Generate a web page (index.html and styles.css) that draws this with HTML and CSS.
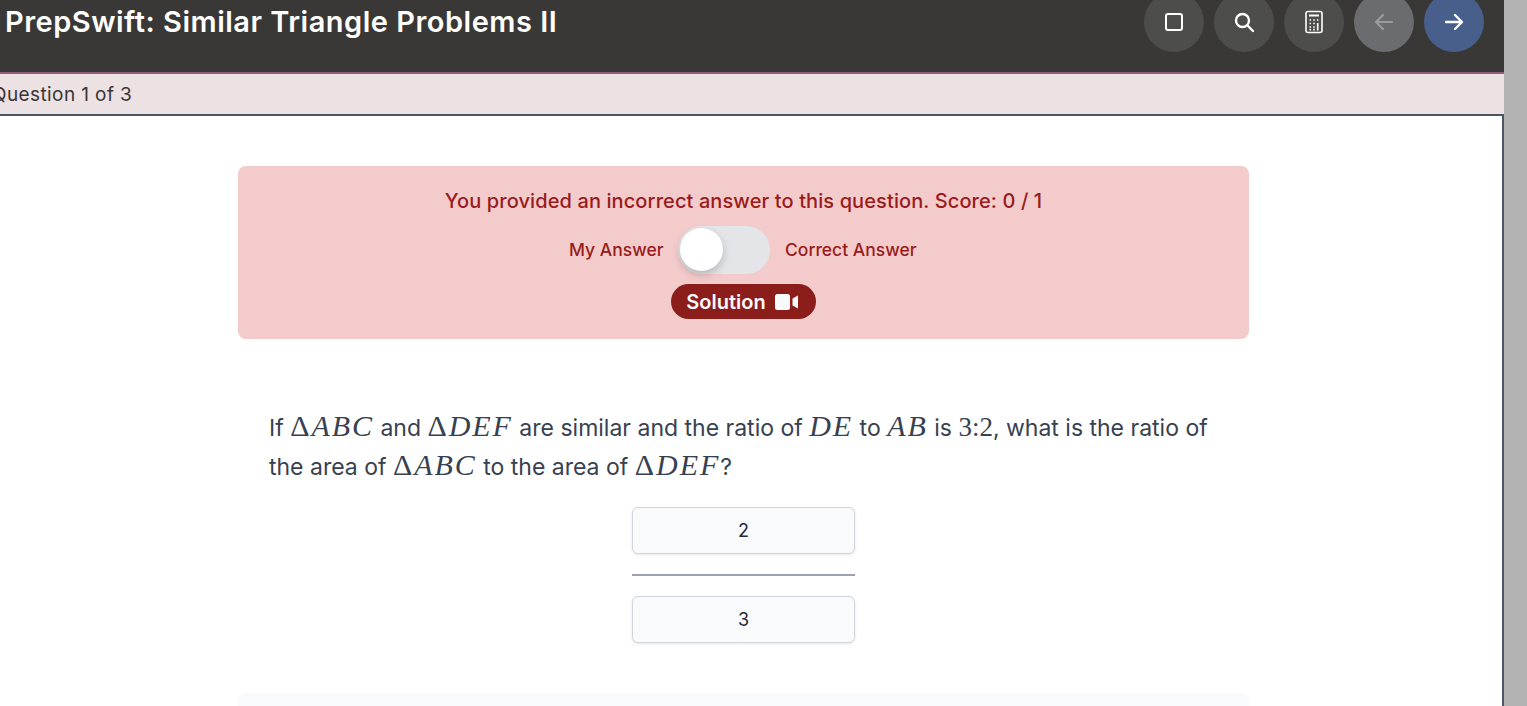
FILE: index.html
```html
<!DOCTYPE html>
<html lang="en">
<head>
    <meta charset="UTF-8">
    <title>PrepSwift: Similar Triangle Problems II</title>
    <link rel="stylesheet" href="styles.css">
</head>
<body>
    <div class="app">
        <header class="topbar">
            <h1>PrepSwift: Similar Triangle Problems II</h1>
            <div class="tools">
                <button class="tool">
                    <svg viewBox="0 0 24 24" width="24" height="24" fill="none" stroke="#fff" stroke-width="2"><rect x="4" y="4" width="16" height="16" rx="2"/></svg>
                </button>
                <button class="tool">
                    <svg viewBox="0 0 24 24" width="24" height="24" fill="none" stroke="#fff" stroke-width="2.4" stroke-linecap="round"><circle cx="10.500" cy="10.500" r="6.500"/><path d="M15.500 15.500L21 21"/></svg>
                </button>
                <button class="tool">
                    <svg viewBox="0 0 24 24" width="24" height="24" fill="none" stroke="#fff" stroke-width="1.600"><rect x="4" y="1.500" width="16" height="21" rx="2"/><path d="M7 5.500h10" stroke-width="2"/><path d="M7.500 10h1.600M11.200 10h1.600M14.900 10h1.600M7.500 13.500h1.600M11.200 13.500h1.600M7.500 17h1.600M11.200 17h1.600M7.500 19.600h1.600M11.200 19.600h1.600M15.700 13v7.500" stroke-width="1.700"/></svg>
                </button>
                <button class="tool tool-off">
                    <svg viewBox="0 0 24 24" width="24" height="24" fill="none" stroke="#9a9b9f" stroke-width="2.200" stroke-linecap="round" stroke-linejoin="round"><path d="M20 12H4M11 5l-7 7 7 7"/></svg>
                </button>
                <button class="tool tool-next">
                    <svg viewBox="0 0 24 24" width="24" height="24" fill="none" stroke="#fff" stroke-width="2.400" stroke-linecap="round" stroke-linejoin="round"><path d="M4 12h16M13 5l7 7-7 7"/></svg>
                </button>
            </div>
        </header>
        <div class="progress"><span>Question 1 of 3</span></div>
        <main class="content">
            <section class="result">
                <p class="result-text">You provided an incorrect answer to this question. Score: 0 / 1</p>
                <div class="switch-row">
                    <span class="switch-label left">My Answer</span>
                    <div class="switch"><div class="knob"></div></div>
                    <span class="switch-label">Correct Answer</span>
                </div>
                <button class="solution">Solution
                    <svg viewBox="0 0 24 16" width="24" height="16"><rect x="0" y="0" width="15" height="16" rx="2.500" fill="#f9fafb"/><path d="M17.500 4.500L23 1.500v13l-5.500-3z" fill="#f9fafb"/></svg>
                </button>
            </section>
            <p class="question">If <span class="math"><span class="up">Δ</span>ABC</span> and <span class="math"><span class="up">Δ</span>DEF</span> are similar and the ratio of <span class="math">DE</span> to <span class="math">AB</span> is <span class="math"><span class="up ratio">3:2</span></span>, what is the ratio of the area of <span class="math"><span class="up">Δ</span>ABC</span> to the area of <span class="math"><span class="up">Δ</span>DEF</span>?</p>
            <div class="fraction">
                <div class="answer">2</div>
                <div class="bar"></div>
                <div class="answer">3</div>
            </div>
            <section class="next-card"></section>
        </main>
    </div>
    <div class="gutter"></div>
</body>
</html>
```

FILE: styles.css
```css
* {
    box-sizing: border-box;
}
html, body {
    height: 100%;
    margin: 0;
    overflow: hidden;
}
body {
    display: flex;
    font-family: 'Inter', sans-serif;
    background: white;
    color: #374151;
}
.app {
    width: 1504px;
    height: 706px;
    display: flex;
    flex-direction: column;
    overflow: hidden;
}
.gutter {
    flex: 1;
    background: #b3b3b3;
}
.topbar {
    height: 74px;
    flex: none;
    display: flex;
    justify-content: space-between;
    align-items: flex-start;
    padding: 0 20px 0 5px;
    background: #393836;
    border-bottom: 2px solid #8f5f77;
}
h1 {
    margin: 3px 0 0;
    font-size: 29px;
    line-height: 38px;
    font-weight: 600;
    letter-spacing: 0.5px;
    color: white;
}
.tools {
    display: flex;
    gap: 10px;
    margin-top: -8px;
}
.tool {
    width: 60px;
    height: 60px;
    padding: 0;
    border: none;
    border-radius: 50%;
    background: #4d4d4c;
    display: flex;
    align-items: center;
    justify-content: center;
}
.tool-off {
    background: #6b6c70;
}
.tool-next {
    background: #485f8c;
}
.progress {
    height: 42px;
    flex: none;
    display: flex;
    align-items: center;
    background: #ece2e4;
    border-bottom: 2px solid #4b5563;
    font-size: 19px;
    letter-spacing: 0.4px;
    color: #3a3434;
}
.progress span {
    margin-left: -8px;
}
.content {
    flex: 1;
    padding: 50px 0 0 238px;
    border-right: 2px solid #4b5563;
}
.result {
    width: 1011px;
    height: 173px;
    padding-top: 23px;
    display: flex;
    flex-direction: column;
    align-items: center;
    background: #f4cbcb;
    border-radius: 8px;
    color: #991b1b;
}
.result-text {
    margin: 0;
    font-size: 20px;
    line-height: 24px;
    font-weight: 500;
    letter-spacing: 0.1px;
}
.switch-row {
    display: grid;
    grid-template-columns: 94px 92px 133px;
    align-items: center;
    gap: 15px;
    margin-top: 13px;
    font-size: 17.5px;
    font-weight: 500;
    white-space: nowrap;
}
.switch-label {
    padding-bottom: 2px;
}
.switch-label.left {
    text-align: right;
}
.switch {
    height: 48px;
    padding: 2px;
    background: #e3e5e9;
    border-radius: 24px;
}
.knob {
    width: 43px;
    height: 43px;
    border-radius: 50%;
    background: white;
    box-shadow: 0 4px 8px rgba(0, 0, 0, 0.2);
}
.solution {
    width: 145px;
    height: 35px;
    margin-top: 10px;
    padding: 0 2px 0 0;
    border: none;
    border-radius: 18px;
    display: flex;
    align-items: center;
    justify-content: center;
    gap: 9px;
    background: #8b1e1b;
    color: #f9fafb;
    font-family: inherit;
    font-size: 20px;
    font-weight: 600;
}
.question {
    width: 950px;
    margin: 70px 0 0 31px;
    font-size: 23px;
    line-height: 39px;
    color: #374151;
}
.math {
    font-family: 'Liberation Serif', serif;
    font-style: italic;
    font-size: 30px;
    line-height: 1;
    letter-spacing: 1.95px;
}
.math .up {
    font-style: normal;
}
.math .ratio {
    font-size: 27px;
    letter-spacing: 0;
}
.fraction {
    width: 223px;
    margin: 20px 0 0 394px;
    display: flex;
    flex-direction: column;
}
.answer {
    height: 47px;
    display: flex;
    align-items: center;
    justify-content: center;
    background: #f9fafb;
    border: 1px solid #d1d5db;
    border-radius: 6px;
    box-shadow: 0 1px 3px rgba(0, 0, 0, 0.1);
    font-size: 18px;
    color: #1f2937;
}
.bar {
    height: 2px;
    margin: 20px 0;
    background: #9ca3af;
}
.next-card {
    width: 1011px;
    height: 40px;
    margin-top: 50px;
    background: #f9fafb;
    border-radius: 8px;
}
```
